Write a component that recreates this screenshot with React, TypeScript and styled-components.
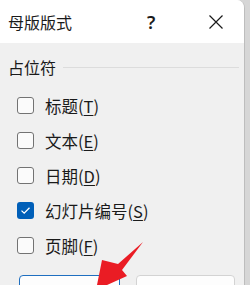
import React from "react";
import styled, { createGlobalStyle } from "styled-components";

const Global = createGlobalStyle`
  html, body { margin: 0; padding: 0; }
  body {
    background: #d6d6d6;
    width: 250px;
    height: 285px;
    overflow: hidden;
    font-family: "Noto Sans CJK SC", "Noto Sans", sans-serif;
  }
`;

const Stage = styled.div`
  position: relative;
  width: 250px;
  height: 285px;
  overflow: hidden;
`;

const Dialog = styled.div`
  width: 244px;
  height: 300px;
  border-top-right-radius: 8px;
  border-right: 1px solid #bdbdbd;
  overflow: hidden;
  display: flex;
  flex-direction: column;
  background: #f0f0f0;
`;

const TitleBar = styled.div`
  height: 43px;
  flex: none;
  background: #ffffff;
  display: flex;
  align-items: center;
  padding-left: 8px;
  color: #1a1a1a;
`;

const Title = styled.div`
  font-size: 16px;
  line-height: 20px;
  flex: 1;
`;

const HelpGlyph = styled.div`
  font-family: "Noto Sans", sans-serif;
  font-size: 18px;
  font-weight: 600;
  line-height: 20px;
  width: 10px;
  margin-right: 51px;
  color: #1a1a1a;
`;

const CloseBtn = styled.div`
  width: 16px;
  height: 16px;
  margin-right: 20px;
  display: flex;
`;

const Body = styled.div`
  padding: 14px 0 0 8px;
  display: flex;
  flex-direction: column;
`;

const GroupHeader = styled.div`
  display: flex;
  align-items: center;
  height: 20px;
  font-size: 16px;
  color: #1a1a1a;
  margin-bottom: 11px;
`;

const GroupLine = styled.div`
  flex: none;
  width: 176px;
  height: 1px;
  background: #dcdcdc;
  margin-left: 7px;
`;

const Row = styled.label`
  height: 35px;
  display: flex;
  align-items: center;
  padding-left: 9px;
  font-size: 16.5px;
  color: #1a1a1a;
`;

const Box = styled.span<{ $checked?: boolean }>`
  box-sizing: border-box;
  width: 17px;
  height: 17px;
  border-radius: 3px;
  border: ${(p) => (p.$checked ? "none" : "1px solid #737373")};
  background: ${(p) => (p.$checked ? "#005fb8" : "#fbfbfb")};
  display: flex;
  align-items: center;
  justify-content: center;
  margin-right: 11px;
  flex: none;
`;

const Key = styled.span`
  text-decoration: underline;
  text-underline-offset: 2px;
`;

const Buttons = styled.div`
  display: flex;
  gap: 16px;
  margin-top: 12px;
  padding-left: 11px;
`;

const Button = styled.div<{ $primary?: boolean }>`
  box-sizing: border-box;
  width: ${(p) => (p.$primary ? 101 : 99)}px;
  height: 32px;
  border-radius: 4px;
  background: #fdfdfd;
  border: 1px solid ${(p) => (p.$primary ? "#1f6fc0" : "#d3d3d3")};
`;

const Arrow = styled.svg`
  position: absolute;
  left: 0;
  top: 0;
  pointer-events: none;
`;

const items: { text: string; key: string; checked?: boolean }[] = [
  { text: "标题", key: "T" },
  { text: "文本", key: "E" },
  { text: "日期", key: "D" },
  { text: "幻灯片编号", key: "S", checked: true },
  { text: "页脚", key: "F" },
];

export default function App() {
  return (
    <Stage>
      <Global />
      <Dialog>
        <TitleBar>
          <Title>母版版式</Title>
          <HelpGlyph>?</HelpGlyph>
          <CloseBtn>
            <svg width="16" height="16" viewBox="0 0 16 16">
              <path d="M1.5 1.5 L14.5 14.5 M14.5 1.5 L1.5 14.5" stroke="#1a1a1a" strokeWidth="1.2" fill="none" />
            </svg>
          </CloseBtn>
        </TitleBar>
        <Body>
          <GroupHeader>
            占位符
            <GroupLine />
          </GroupHeader>
          {items.map((it) => (
            <Row key={it.key}>
              <Box $checked={it.checked}>
                {it.checked && (
                  <svg width="11" height="9" viewBox="0 0 11 9">
                    <path d="M1.5 4.6 L4.2 7.2 L9.5 1.8" stroke="#ffffff" strokeWidth="1.3" fill="none" />
                  </svg>
                )}
              </Box>
              {it.text}(<Key>{it.key}</Key>)
            </Row>
          ))}
          <Buttons>
            <Button $primary />
            <Button />
          </Buttons>
        </Body>
      </Dialog>
      <Arrow width="250" height="285" viewBox="0 0 250 285">
        <polygon points="143,242 118,264 102,260 96,290 127,276 122,270" fill="#ea1c24" />
      </Arrow>
    </Stage>
  );
}
